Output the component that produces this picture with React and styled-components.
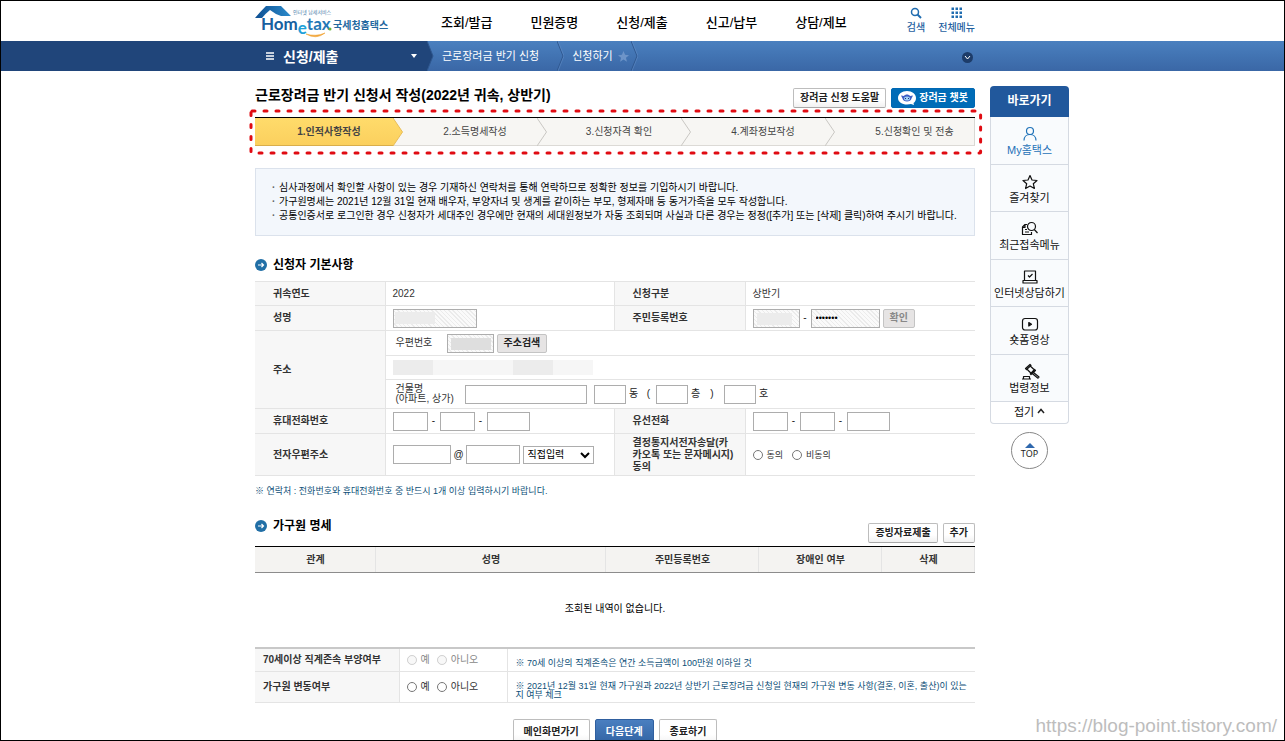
import React from "react";
import styled, { createGlobalStyle, css } from "styled-components";

const GlobalStyle = createGlobalStyle`
  * { box-sizing: border-box; }
  body {
    margin: 0;
    background: #fff;
    color: #333;
    font-family: "Liberation Sans", "Noto Sans CJK KR", sans-serif;
    font-size: 10px;
    line-height: 14px;
  }
  a { color: inherit; text-decoration: none; }
  h1, h2, ul, ol, p { margin: 0; padding: 0; }
  ul, ol { list-style: none; }
  button, input, select { font-family: inherit; }
`;

const Frame = styled.div`
  position: relative;
  height: 100vh;
  border: 1px solid #000;
  overflow: hidden;
`;

// HEADER
const Header = styled.header`
  height: 40px;
  max-width: 974px;
  padding-left: 254px;
  display: flex;
  align-items: center;
`;

const LogoLink = styled.a`
  width: 186px;
  height: 36px;
  svg { display: block; }
`;

const MainNav = styled.nav`
  display: flex;
  gap: 38px;
  padding-top: 4px;
  a {
    color: #000;
    font-size: 13px;
    font-weight: 500;
    line-height: 18px;
    white-space: nowrap;
  }
`;

const Utils = styled.div`
  display: flex;
  gap: 13px;
  margin-left: auto;
`;

const UtilLink = styled.a`
  display: flex;
  flex-direction: column;
  align-items: center;
  gap: 2px;
  color: #1f5f9f;
  font-weight: 500;
  white-space: nowrap;
`;

// LOCATION BAR
const Bar = styled.div`
  display: flex;
  height: 30px;
  background: linear-gradient(#4a80bf, #3a67a6);
  color: #fff;
`;

const BarCurrent = styled.button`
  display: flex;
  align-items: center;
  width: 426px;
  padding: 0 10px 0 265px;
  border: 0;
  background: #20457a;
  color: #fff;
  font-size: 14px;
  font-weight: bold;
  span { margin: 0 auto 0 9px; }
`;

const BarPath = styled.div`
  display: flex;
  align-items: center;
  width: 549px;
  font-size: 11px;
`;

const Crumb = styled.a`
  display: flex;
  align-items: center;
  gap: 5px;
  padding: 0 ${(p) => (p.$last ? "2px" : "18px")} 0 8px;
  white-space: nowrap;
`;

const BarToggle = styled.button`
  margin: 2px 3px 0 auto;
  width: 11px;
  height: 11px;
  padding: 0;
  border: 0;
  border-radius: 50%;
  background: #1d3c69;
  svg { display: block; }
`;

// BODY
const Content = styled.div`
  display: flex;
  align-items: flex-start;
  gap: 15px;
  max-width: 1068px;
  padding: 15px 0 0 254px;
`;

const Main = styled.main`
  flex: 1;
  min-width: 0;
`;

const TitleRow = styled.div`
  display: flex;
  align-items: center;
  height: 23px;
  margin-bottom: 8px;
`;

const PageTitle = styled.h1`
  flex: 1;
  color: #000;
  font-size: 14px;
  line-height: 18px;
  padding-bottom: 6px;
`;

const Buttons = styled.div`
  display: flex;
  justify-content: ${(p) => (p.$center ? "center" : "flex-end")};
  gap: 5px;
  margin-top: ${(p) => p.$top || 0}px;
`;

const Button = styled.button`
  display: flex;
  align-items: center;
  justify-content: center;
  gap: 3px;
  height: ${(p) => (p.$tall ? "26px" : "20px")};
  padding: 0 ${(p) => (p.$tall ? "10px" : "6px")};
  border: 1px solid #bdbdbd;
  border-bottom-color: #a8a8a8;
  border-radius: 2px;
  background: linear-gradient(#fff 60%, #f1f1f1);
  color: #222;
  font-size: 10px;
  font-weight: bold;
  line-height: 14px;
  white-space: nowrap;
  ${(p) => p.$kind === "chat" && css`
    border-color: #0068b3;
    background: #006cb7;
    color: #fff;
  `}
  ${(p) => p.$kind === "primary" && css`
    border-color: #2f5f9f;
    background: linear-gradient(#4a7fc0, #3163a3);
    color: #fff;
  `}
  ${(p) => p.$kind === "gray" && css`
    height: 19px;
    border-color: #c4c4c4;
    background: #e6e4e4;
  `}
  &:disabled { color: #888; }
`;

// STEPS
const StepBox = styled.div`
  position: relative;
`;

const StepMark = styled.svg`
  position: absolute;
  left: -6px;
  top: -8px;
  width: calc(100% + 14px);
  height: 46px;
  pointer-events: none;
`;

const Steps = styled.ol`
  display: grid;
  grid-template-columns: 148fr 144fr 144fr 144fr 140fr;
  border-top: 1px solid #000;
  background: #f7f6f3;
`;

const Step = styled.li`
  display: flex;
  height: 28px;
  color: #444;
  svg { display: block; }
  &:last-child span { padding-left: 20px; border-right: 1px solid #d8d8d4; }
`;

const StepLabel = styled.span`
  flex: 1;
  padding: 7px 0 6px 10px;
  border-bottom: 1px solid ${(p) => (p.$active ? "#d9ae4c" : "#dcdad6")};
  background: ${(p) => (p.$active ? "linear-gradient(#ffdb6b, #fbd05e)" : "none")};
  font-weight: ${(p) => (p.$active ? "bold" : "normal")};
  text-align: center;
  white-space: nowrap;
`;

const Notice = styled.ul`
  margin: 22px 0 18px;
  padding: 12px 16px;
  border: 1px solid #dbe2ec;
  background: #f3f7fc;
  color: #000;
  li { display: flex; }
  li::before { content: "·"; width: 7px; color: #666; font-weight: bold; }
`;

// SECTIONS
const SectionHead = styled.div`
  display: flex;
  align-items: flex-start;
  justify-content: space-between;
  height: ${(p) => (p.$tall ? "31px" : "27px")};
`;

const SectionTitle = styled.h2`
  display: flex;
  align-items: center;
  gap: 6px;
  color: #000;
  font-size: 12px;
  line-height: 22px;
`;

const FormTable = styled.table`
  width: 100%;
  table-layout: fixed;
  border-collapse: collapse;
  border-top: ${(p) => (p.$thick ? "2px" : "1px")} solid #c8c8c8;
  border-bottom: 1px solid #c4c4c4;
`;

const Label = styled.th`
  padding: 0 8px 0 ${(p) => p.$pad || 18}px;
  border: 1px solid #e4e4e4;
  border-left-width: ${(p) => (p.$inner ? "1px" : "0")};
  background: #f7f7f7;
  line-height: 12px;
  text-align: left;
  word-break: break-all;
`;

const Cell = styled.td`
  height: ${(p) => p.$h}px;
  padding: 0 0 0 7px;
  border-top: 1px solid #e4e4e4;
  border-bottom: 1px solid #e4e4e4;
  border-right: ${(p) => (p.$line ? "1px solid #e4e4e4" : "0")};
`;

const Line = styled.div`
  display: flex;
  align-items: center;
  gap: ${(p) => p.$gap || 3}px;
`;

const Field = styled.input`
  width: ${(p) => p.$w}px;
  height: 19px;
  padding: 0 4px;
  border: 1px solid #adadad;
  border-radius: 0;
  background: #fff;
  font-size: 10px;
  &:read-only {
    background:
      ${(p) => (p.$mask ? `linear-gradient(${p.$mask}, ${p.$mask}) ${p.$at || "3px 3px"} / ${p.$mw}px 12px no-repeat,` : "")}
      repeating-linear-gradient(45deg, #fafafa 0 2px, #ebebeb 2px 3px);
  }
  &[type="password"] { font-size: 9px; }
`;

const Sep = styled.span`
  width: ${(p) => p.$w || 6}px;
  text-align: center;
  color: #222;
`;

const Caption = styled.span`
  width: ${(p) => p.$w}px;
  padding-left: 3px;
  line-height: 10px;
  white-space: nowrap;
`;

const Masked = styled.div`
  display: grid;
  grid-template-columns: repeat(5, 40px);
  span { height: 15px; background: #f6f6f6; }
  span:nth-child(3n + 1) { background: #ececec; }
`;

const Select = styled.select`
  width: 71px;
  height: 18px;
  padding: 0;
  border: 1px solid #adadad;
  border-radius: 0;
  background: #fff;
  color: #000;
  font-size: 10px;
`;

const Choice = styled.label`
  display: flex;
  align-items: center;
  gap: 4px;
  color: ${(p) => (p.$off ? "#888" : "#333")};
  font-size: ${(p) => (p.$small ? "9px" : "10px")};
  white-space: nowrap;
  input { width: 10px; height: 10px; margin: 0; }
`;

const Help = styled.p`
  margin: ${(p) => (p.$block ? "8px 0 17px" : "7px 6px 0 1px")};
  color: #0d4f78;
  font-size: 9px;
  line-height: ${(p) => (p.$block ? "14px" : "9px")};
  word-break: break-all;
`;

const ListTable = styled.table`
  width: 100%;
  table-layout: fixed;
  border-collapse: collapse;
  border-top: 1px solid #000;
  th {
    height: 26px;
    padding: 0;
    border-bottom: 1px solid #8c8c8c;
    background: #f4f3f1;
    box-shadow: inset -1px 0 #e4e4e4;
  }
  td {
    height: 74px;
    padding: 0 0 2px;
    color: #000;
    text-align: center;
  }
`;

// QUICK MENU
const Quick = styled.aside`
  display: flex;
  flex-direction: column;
  align-items: center;
  width: 79px;
`;

const QuickTitle = styled.h2`
  width: 100%;
  border-radius: 4px 4px 0 0;
  background: #21589c;
  color: #fff;
  font-size: 12px;
  line-height: 31px;
  text-align: center;
`;

const QuickList = styled.div`
  display: flex;
  flex-direction: column;
  width: 100%;
  height: 285px;
`;

const QuickItem = styled.a`
  display: flex;
  flex: 1;
  flex-direction: column;
  align-items: center;
  padding-top: 9px;
  border: 1px solid #d5dae2;
  border-top: 0;
  background: #f9fbfd;
  color: ${(p) => (p.$blue ? "#1f72b8" : "#111")};
  font-size: 11px;
  white-space: nowrap;
  svg { flex: none; }
`;

const Fold = styled.button`
  display: flex;
  align-items: center;
  justify-content: center;
  gap: 3px;
  width: 100%;
  height: 22px;
  padding: 0 0 3px;
  border: 1px solid #d5dae2;
  border-top: 0;
  border-radius: 0 0 4px 4px;
  background: #fff;
  color: #111;
  font-size: 11px;
`;

const TopLink = styled.a`
  display: flex;
  flex-direction: column;
  align-items: center;
  width: 37px;
  height: 37px;
  margin-top: 8px;
  padding-top: 10px;
  border: 1px solid #888;
  border-radius: 50%;
  color: #222;
  font-family: "Noto Sans", sans-serif;
  font-size: 9px;
  line-height: 12px;
`;

const Watermark = styled.a`
  position: absolute;
  right: 7px;
  bottom: 3px;
  color: #bdbdbd;
  font-size: 19px;
  line-height: 22px;
`;

const Logo = () => (
  <svg width="136" height="36" viewBox="0 0 136 36">
    <defs>
      <linearGradient id="roof" x1="0" x2="1">
        <stop offset="0" stopColor="#0e4f92" />
        <stop offset="1" stopColor="#2b8bcb" />
      </linearGradient>
    </defs>
    <path d="M0 15 Q5 9 11 3 H26 L36 13 H26 Q20 11 15 7 Q10 11 7 15 Z" fill="url(#roof)" />
    <text x="38" y="11" fontSize="5" fill="#4a7da8">인터넷 납세서비스</text>
    <text x="6" y="27" fontFamily="Lato, sans-serif" fontSize="17" fontWeight="bold" fill="#17609f">
      Hom<tspan dy="4" fill="#20a0d8">e</tspan><tspan dy="-4" fill="#2478b6">tax</tspan>
    </text>
    <circle cx="75" cy="26" r="1.500" fill="#6bb43f" />
    <path d="M51 31 Q61 37 70 30 Q61 34 51 31" fill="#f2a63b" stroke="#f2a63b" strokeWidth="0.600" />
    <text x="78" y="26" fontSize="10" fontWeight="bold" fill="#24689f">국세청홈택스</text>
  </svg>
);

const BarArrow = ({ fill }) => (
  <svg width="7" height="30" viewBox="0 0 7 30">
    <path d="M0 0 L6 15 L0 30" fill={fill || "none"} stroke="#2f588f" />
    {!fill && <path d="M1 0 L7 15 L1 30" fill="none" stroke="#6793ca" strokeWidth="0.500" />}
  </svg>
);

const StepArrow = ({ active }) => (
  <svg width="10" height="28" viewBox="0 0 10 28">
    <defs>
      <linearGradient id="stepFill" x1="0" y1="0" x2="0" y2="1">
        <stop offset="0" stopColor="#ffdb6b" />
        <stop offset="1" stopColor="#fbd05e" />
      </linearGradient>
    </defs>
    <path d="M0 27.5 H10" stroke="#dcdad6" />
    <path d="M0 0 L9.500 14 L0 28" fill={active ? "url(#stepFill)" : "#f7f6f3"} stroke={active ? "#e8bd58" : "#c9c7c3"} />
  </svg>
);

const SectionIcon = () => (
  <svg width="12" height="12" viewBox="0 0 12 12">
    <circle cx="6" cy="6" r="6" fill="#216fa6" />
    <path d="M3 6 H8.500 M6.500 4 L8.500 6 L6.500 8" fill="none" stroke="#fff" strokeWidth="1.200" />
  </svg>
);

const ChatIcon = () => (
  <svg width="18" height="14" viewBox="0 0 18 14">
    <path d="M9 0 C14 0 18 3 18 7 C18 9.500 17 11 15.500 12 L16 14 L13 13 C11.800 13.300 10.500 13.500 9 13.500 C4 13.500 0 11 0 7 C0 3 4 0 9 0" fill="#fff" />
    <path d="M3 4.500 L6 5 C7 3 11 3 12 5 L15 4.500 L13.500 7.500 C13 11.500 5 11.500 4.500 7.500 Z" fill="#3f5fc4" />
    <ellipse cx="9" cy="7.500" rx="3" ry="2" fill="#9fd0f5" />
    <path d="M7.500 7 V8 M10.500 7 V8" stroke="#1c2f78" />
  </svg>
);

const icons = {
  user: <><circle cx="8" cy="5" r="3.500" /><path d="M2 14.500 C2 11 4.500 8.500 8 8.500 S14 11 14 14.500" /></>,
  star: <path d="M8 1.500 L10 6 L15 6.500 L11.300 9.700 L12.400 14.500 L8 12 L3.600 14.500 L4.700 9.700 L1 6.500 L6 6 Z" />,
  recent: <><path d="M5 3.500 H3 L0.500 6 V13.500 H9.500 V11 M0.500 6.500 H3 V4 M3 8.500 H5 M3 11 H7" /><circle cx="9.500" cy="5.500" r="4" /><path d="M12.300 8.500 L15.500 12" /></>,
  laptop: <><path d="M2.500 11 V2 H13.500 V11 M1 11.500 H15 V14 H1 Z" /><path d="M6 6.500 L7.500 8 L10.500 5" /></>,
  video: <><rect x="0.500" y="2.500" width="15" height="11.500" rx="2.500" /><path d="M6.800 6.500 L9.500 8.300 L6.800 10 Z" fill="currentColor" /></>,
  law: <><path d="M3.500 4.500 L8 0.500 L9 1.500 L4.500 5.500 Z M5.300 5.500 L8.800 9 M8.500 2.200 L12 5.500 M8.300 9.800 L12.500 5.500 L13.500 6.500 L9 10.500 Z M11.500 8.500 L17 13 L16 14.200 L10.500 9.800 M0 15 H9 M1.500 15 V12.500 H7.500 V15" /></>,
};

const QuickIcon = ({ name }) => (
  <svg width="16" height="17" viewBox="0 0 16 17" overflow="visible" fill="none" stroke="currentColor" strokeWidth="1.200" strokeLinejoin="round">
    {icons[name]}
  </svg>
);

const menus = ["조회/발급", "민원증명", "신청/제출", "신고/납부", "상담/제보"];

const steps = ["1.인적사항작성", "2.소득명세작성", "3.신청자격 확인", "4.계좌정보작성", "5.신청확인 및 전송"];

const notices = [
  "심사과정에서 확인할 사항이 있는 경우 기재하신 연락처를 통해 연락하므로 정확한 정보를 기입하시기 바랍니다.",
  "가구원명세는 2021년 12월 31일 현재 배우자, 부양자녀 및 생계를 같이하는 부모, 형제자매 등 동거가족을 모두 작성합니다.",
  "공통인증서로 로그인한 경우 신청자가 세대주인 경우에만 현재의 세대원정보가 자동 조회되며 사실과 다른 경우는 정정([추가] 또는 [삭제] 클릭)하여 주시기 바랍니다.",
];

const quickMenus = [
  ["user", "My홈택스"],
  ["star", "즐겨찾기"],
  ["recent", "최근접속메뉴"],
  ["laptop", "인터넷상담하기"],
  ["video", "숏폼영상"],
  ["law", "법령정보"],
];

const Phone = ({ label }) => (
  <Line>
    <Field $w={35} aria-label={`${label} 앞자리`} />
    <Sep>-</Sep>
    <Field $w={35} aria-label={`${label} 가운데자리`} />
    <Sep>-</Sep>
    <Field $w={43} aria-label={`${label} 뒷자리`} />
  </Line>
);

const YesNo = ({ name, disabled }) => (
  <Line $gap={7}>
    <Choice $off={disabled}><input type="radio" name={name} disabled={disabled} />예</Choice>
    <Choice $off={disabled}><input type="radio" name={name} disabled={disabled} />아니오</Choice>
  </Line>
);

export default function App() {
  return (
    <Frame>
      <GlobalStyle />

      <Header>
        <LogoLink href="#" aria-label="국세청홈택스"><Logo /></LogoLink>
        <MainNav>
          {menus.map((m) => <a href="#" key={m}>{m}</a>)}
        </MainNav>
        <Utils>
          <UtilLink href="#">
            <svg width="12" height="12" viewBox="0 0 12 12" fill="none" stroke="#1f6cb0">
              <circle cx="5" cy="5" r="3.500" strokeWidth="1.500" />
              <path d="M7.500 7.500 L11 11" strokeWidth="2" />
            </svg>
            검색
          </UtilLink>
          <UtilLink href="#">
            <svg width="12" height="12" viewBox="0 0 12 12" fill="#1f6cb0">
              {[0, 4, 8].map((y) => [0, 4, 8].map((x) => <rect key={x + "-" + y} x={x + 0.5} y={y + 0.5} width="2.500" height="2.500" />))}
            </svg>
            전체메뉴
          </UtilLink>
        </Utils>
      </Header>

      <Bar>
        <BarCurrent>
          <svg width="8" height="8" viewBox="0 0 8 8" stroke="#fff"><path d="M0 1 H8 M0 4 H8 M0 7 H8" strokeWidth="1.500" /></svg>
          <span>신청/제출</span>
          <svg width="6" height="4" viewBox="0 0 6 4" fill="#fff"><path d="M0 0 H6 L3 4 Z" /></svg>
        </BarCurrent>
        <BarPath>
          <BarArrow fill="#20457a" />
          <Crumb href="#">근로장려금 반기 신청</Crumb>
          <BarArrow />
          <Crumb href="#" $last>
            신청하기
            <svg width="11" height="11" viewBox="0 0 16 16" fill="#6d94c8"><path d="M8 0 L10.300 5.500 L16 6 L11.600 9.800 L13 15.500 L8 12.400 L3 15.500 L4.400 9.800 L0 6 L5.700 5.500 Z" /></svg>
          </Crumb>
          <BarArrow />
          <BarToggle aria-label="펼치기">
            <svg width="11" height="11" viewBox="0 0 11 11" fill="none" stroke="#fff"><path d="M3 4 L5.500 7 L8 4" /></svg>
          </BarToggle>
        </BarPath>
      </Bar>

      <Content>
        <Main>
          <TitleRow>
            <PageTitle>근로장려금 반기 신청서 작성(2022년 귀속, 상반기)</PageTitle>
            <Buttons>
              <Button>장려금 신청 도움말</Button>
              <Button $kind="chat"><ChatIcon />장려금 챗봇</Button>
            </Buttons>
          </TitleRow>

          <StepBox>
            <Steps>
              {steps.map((s, i) => (
                <Step key={s}>
                  <StepLabel $active={i === 0}>{s}</StepLabel>
                  {i < 4 && <StepArrow active={i === 0} />}
                </Step>
              ))}
            </Steps>
            <StepMark>
              <rect x="2" y="2" width="99.400%" height="42" rx="1" fill="none" stroke="#e00b12" strokeWidth="3" strokeLinecap="round" strokeDasharray="3 9" />
            </StepMark>
          </StepBox>

          <Notice>
            {notices.map((n) => <li key={n}>{n}</li>)}
          </Notice>

          <SectionHead>
            <SectionTitle><SectionIcon />신청자 기본사항</SectionTitle>
          </SectionHead>
          <FormTable>
            <colgroup>
              <col width="130" /><col width="229" /><col width="131" /><col width="230" />
            </colgroup>
            <tbody>
              <tr>
                <Label>귀속연도</Label>
                <Cell $h={24}>2022</Cell>
                <Label $inner>신청구분</Label>
                <Cell>상반기</Cell>
              </tr>
              <tr>
                <Label>성명</Label>
                <Cell $h={25}><Line><Field $w={84} $mask="#ececec" $mw={40} $at="1px 2px" readOnly aria-label="성명" /></Line></Cell>
                <Label $inner>주민등록번호</Label>
                <Cell>
                  <Line>
                    <Field $w={47} $mask="#ececec" $mw={35} readOnly aria-label="주민등록번호 앞자리" />
                    <Sep $w={5}>-</Sep>
                    <Field $w={69} type="password" defaultValue="1234567" readOnly aria-label="주민등록번호 뒷자리" />
                    <Button $kind="gray" disabled>확인</Button>
                  </Line>
                </Cell>
              </tr>
              <tr>
                <Label rowSpan={3}>주소</Label>
                <Cell $h={25} colSpan={3}>
                  <Line>
                    <Caption $w={51}>우편번호</Caption>
                    <Field $w={47} $mask="#dedede" $mw={40} readOnly aria-label="우편번호" />
                    <Button $kind="gray">주소검색</Button>
                  </Line>
                </Cell>
              </tr>
              <tr>
                <Cell $h={24} colSpan={3}>
                  <Masked><span /><span /><span /><span /><span /></Masked>
                </Cell>
              </tr>
              <tr>
                <Cell $h={29} colSpan={3}>
                  <Line>
                    <Caption $w={69}>건물명<br />(아파트, 상가)</Caption>
                    <Field $w={122} aria-label="건물명" />
                    <Sep $w={1} />
                    <Field $w={32} aria-label="동" />
                    <Sep $w={10}>동</Sep>
                    <Sep $w={11}>&nbsp;(</Sep>
                    <Field $w={32} aria-label="층" />
                    <Sep $w={10}>층</Sep>
                    <Sep $w={17}>)</Sep>
                    <Field $w={32} aria-label="호" />
                    <Sep $w={10}>호</Sep>
                  </Line>
                </Cell>
              </tr>
              <tr>
                <Label>휴대전화번호</Label>
                <Cell $h={25}><Phone label="휴대전화번호" /></Cell>
                <Label $inner>유선전화</Label>
                <Cell><Phone label="유선전화" /></Cell>
              </tr>
              <tr>
                <Label>전자우편주소</Label>
                <Cell $h={42}>
                  <Line>
                    <Field $w={58} aria-label="전자우편 아이디" />
                    <Sep $w={9}>@</Sep>
                    <Field $w={54} aria-label="전자우편 도메인" />
                    <Select aria-label="도메인 선택"><option>직접입력</option></Select>
                  </Line>
                </Cell>
                <Label $inner>결정통지서전자송달(카카오톡 또는 문자메시지)동의</Label>
                <Cell>
                  <Line $gap={9}>
                    <Choice $small><input type="radio" name="agree" />동의</Choice>
                    <Choice $small><input type="radio" name="agree" />비동의</Choice>
                  </Line>
                </Cell>
              </tr>
            </tbody>
          </FormTable>
          <Help $block>※ 연락처 : 전화번호와 휴대전화번호 중 반드시 1개 이상 입력하시기 바랍니다.</Help>

          <SectionHead $tall>
            <SectionTitle><SectionIcon />가구원 명세</SectionTitle>
            <Buttons $top={8}>
              <Button>증빙자료제출</Button>
              <Button>추가</Button>
            </Buttons>
          </SectionHead>
          <ListTable>
            <colgroup>
              <col width="121" /><col width="230" /><col width="153" /><col width="123" /><col width="93" />
            </colgroup>
            <thead>
              <tr><th>관계</th><th>성명</th><th>주민등록번호</th><th>장애인 여부</th><th>삭제</th></tr>
            </thead>
            <tbody>
              <tr><td colSpan={5}>조회된 내역이 없습니다.</td></tr>
            </tbody>
          </ListTable>

          <FormTable $thick>
            <colgroup>
              <col width="144" /><col width="108" /><col width="468" />
            </colgroup>
            <tbody>
              <tr>
                <Label $pad={8}>70세이상 직계존속 부양여부</Label>
                <Cell $h={24} $line><YesNo name="parent" disabled /></Cell>
                <Cell><Help>※ 70세 이상의 직계존속은 연간 소득금액이 100만원 이하일 것</Help></Cell>
              </tr>
              <tr>
                <Label $pad={8}>가구원 변동여부</Label>
                <Cell $h={31} $line><YesNo name="change" /></Cell>
                <Cell><Help>※ 2021년 12월 31일 현재 가구원과 2022년 상반기 근로장려금 신청일 현재의 가구원 변동 사항(결혼, 이혼, 출산)이 있는지 여부 체크</Help></Cell>
              </tr>
            </tbody>
          </FormTable>

          <Buttons $center $top={16}>
            <Button $tall>메인화면가기</Button>
            <Button $tall $kind="primary">다음단계</Button>
            <Button $tall>종료하기</Button>
          </Buttons>
        </Main>

        <Quick>
          <QuickTitle>바로가기</QuickTitle>
          <QuickList>
            {quickMenus.map(([icon, name], i) => (
              <QuickItem href="#" key={name} $blue={i === 0}>
                <QuickIcon name={icon} />
                {name}
              </QuickItem>
            ))}
          </QuickList>
          <Fold>
            접기
            <svg width="8" height="6" viewBox="0 0 8 6" fill="none" stroke="#222" strokeWidth="1.500"><path d="M1 5 L4 1.500 L7 5" /></svg>
          </Fold>
          <TopLink href="#">
            <svg width="10" height="5" viewBox="0 0 10 5" fill="#2f68ad"><path d="M5 0 L10 5 H0 Z" /></svg>
            TOP
          </TopLink>
        </Quick>
      </Content>

      <Watermark href="https://blog-point.tistory.com/">https://blog-point.tistory.com/</Watermark>
    </Frame>
  );
}
